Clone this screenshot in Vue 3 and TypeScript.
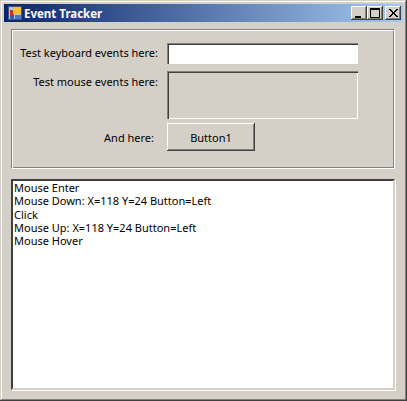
<script setup lang="ts">
const lines = [
  "Mouse Enter",
  "Mouse Down: X=118 Y=24 Button=Left",
  "Click",
  "Mouse Up: X=118 Y=24 Button=Left",
  "Mouse Hover",
];
</script>

<template>
  <div class="window">
    <div class="titlebar">
      <svg class="app-icon" width="16" height="16" viewBox="0 0 16 16">
        <rect x="1.5" y="1.5" width="13" height="13" fill="#b8c4d8" stroke="#44547c" />
        <rect x="3" y="5" width="4" height="6" fill="#d03020" />
        <rect x="6" y="2" width="8" height="7" fill="#f0c030" />
        <rect x="3" y="11" width="4" height="3" fill="#3060b0" />
        <rect x="8" y="10" width="6" height="4" fill="#5078b8" />
      </svg>
      <span class="title">Event Tracker</span>
      <div class="controls">
        <button class="ctl">
          <svg width="12" height="10" viewBox="0 0 12 10"><rect x="2" y="8" width="6" height="2" fill="#000" /></svg>
        </button>
        <button class="ctl">
          <svg width="12" height="10" viewBox="0 0 12 10"><path d="M1.5 1.5h9v8h-9z" fill="none" stroke="#000" /><rect x="1" y="0" width="10" height="2" fill="#000" /></svg>
        </button>
        <button class="ctl close">
          <svg width="12" height="10" viewBox="0 0 12 10"><path d="M2 1l8 8M3 1l8 8M10 1l-8 8M11 1l-8 8" stroke="#000" fill="none" /></svg>
        </button>
      </div>
    </div>

    <div class="body">
      <section class="group">
        <div class="form">
          <label class="lbl">Test keyboard events here:</label>
          <input class="field" type="text" />
          <label class="lbl lbl-top">Test mouse events here:</label>
          <div class="pad"></div>
          <label class="lbl lbl-and">And here:</label>
          <button class="btn">Button1</button>
        </div>
      </section>
      <div class="log">
        <div v-for="(line, i) in lines" :key="i" class="log-line">{{ line }}</div>
      </div>
    </div>
  </div>
</template>

<style>
html,
body {
  margin: 0;
  background: #d4d0c8;
}
</style>

<style scoped>
.window {
  box-sizing: border-box;
  width: 407px;
  height: 401px;
  padding: 4px;
  background: #d4d0c8;
  box-shadow: inset -1px -1px 0 #404040, inset 1px 1px 0 #d4d0c8, inset -2px -2px 0 #808080, inset 2px 2px 0 #fff;
  font-family: "Noto Sans", sans-serif;
  font-size: 11px;
  color: #000;
  display: flex;
  flex-direction: column;
}
.titlebar {
  height: 18px;
  display: flex;
  align-items: center;
  padding: 0 2px 0 3px;
  background: linear-gradient(90deg, #0a246a, #a6caf0);
  flex: none;
}
.app-icon {
  flex: none;
}
.title {
  margin-left: 1px;
  color: #fff;
  font-weight: bold;
  font-size: 11.5px;
  white-space: nowrap;
}
.controls {
  margin-left: auto;
  display: flex;
}
.ctl {
  box-sizing: border-box;
  width: 16px;
  height: 14px;
  padding: 0;
  border: 0;
  background: #d4d0c8;
  box-shadow: inset -1px -1px 0 #404040, inset 1px 1px 0 #fff, inset -2px -2px 0 #808080;
  display: flex;
  align-items: center;
  justify-content: center;
}
.close {
  margin-left: 2px;
}
.body {
  flex: 1;
  display: flex;
  flex-direction: column;
  padding: 7px 8px 7px 7px;
  gap: 10px;
}
.group {
  box-sizing: border-box;
  height: 140px;
  flex: none;
  border: 1px solid #808080;
  border-right-color: #fff;
  border-bottom-color: #fff;
  box-shadow: inset 1px 1px 0 #fff, inset -1px -1px 0 #808080;
  padding: 13px 0 0 0;
}
.form {
  display: grid;
  grid-template-columns: 155px 191px;
  grid-template-rows: 21px 48px 28px;
  row-gap: 7px;
}
.lbl {
  text-align: right;
  padding-right: 9px;
  line-height: 20px;
  white-space: nowrap;
}
.lbl-top {
  line-height: 22px;
}
.lbl-and {
  line-height: 30px;
  padding-right: 13px;
  margin-top: -3px;
}
.field {
  box-sizing: border-box;
  height: 21px;
  width: 191px;
  margin: 0;
  border: 0;
  background: #fff;
  box-shadow: inset 1px 1px 0 #808080, inset 2px 2px 0 #404040, inset -1px -1px 0 #fff;
}
.pad {
  box-sizing: border-box;
  box-shadow: inset 1px 1px 0 #808080, inset 2px 2px 0 #404040, inset -1px -1px 0 #fff;
}
.btn {
  box-sizing: border-box;
  width: 88px;
  height: 28px;
  padding: 0;
  border: 0;
  margin-top: -3px;
  background: #d4d0c8;
  font: inherit;
  color: #000;
  box-shadow: inset -1px -1px 0 #404040, inset 1px 1px 0 #fff, inset -2px -2px 0 #808080;
}
.log {
  flex: 1;
  box-sizing: border-box;
  background: #fff;
  border: 2px solid #808080;
  border-top-color: #404040;
  border-left-color: #404040;
  border-right-color: #d4d0c8;
  border-bottom-color: #d4d0c8;
  box-shadow: 1px 1px 0 #fff;
  padding: 0 1px;
}
.log-line {
  line-height: 13.25px;
  white-space: nowrap;
}
</style>
